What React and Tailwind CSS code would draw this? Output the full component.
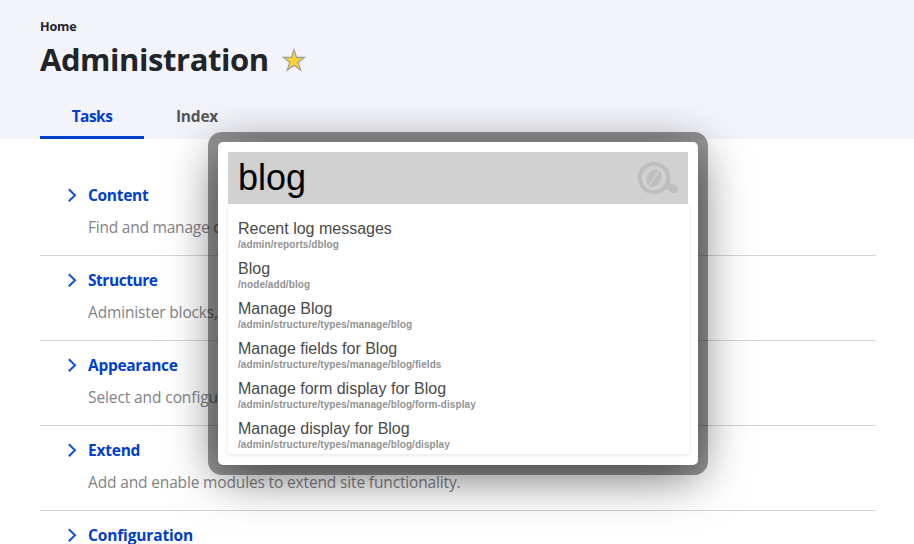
const sections = [
  { title: 'Content', text: 'Find and manage c', titleTrack: 'tracking-[-0.3px]', track: 'tracking-[-0.22px]' },
  { title: 'Structure', text: 'Administer blocks,', titleTrack: 'tracking-[-0.45px]', track: 'tracking-[-0.15px]' },
  { title: 'Appearance', text: 'Select and configu', titleTrack: 'tracking-[-0.3px]', track: 'tracking-[-0.1px]' },
  { title: 'Extend', text: 'Add and enable modules to extend site functionality.', titleTrack: 'tracking-[-0.22px]', track: 'tracking-[-0.15px]' },
  { title: 'Configuration', text: '', titleTrack: 'tracking-[-0.15px]', track: 'tracking-normal' },
];

const results = [
  ['Recent log messages', '/admin/reports/dblog'],
  ['Blog', '/node/add/blog'],
  ['Manage Blog', '/admin/structure/types/manage/blog'],
  ['Manage fields for Blog', '/admin/structure/types/manage/blog/fields'],
  ['Manage form display for Blog', '/admin/structure/types/manage/blog/form-display'],
  ['Manage display for Blog', '/admin/structure/types/manage/blog/display'],
];

function Star() {
  return (
    <svg className="mt-[6px] ml-[14px] h-6 w-6" viewBox="0 0 24 24">
      <path
        d="M12 1.5 14.6 9.4H22.6L16.2 14.2 18.8 22.2 12 17.3 5.2 22.2 7.8 14.2 1.4 9.4H9.4Z"
        fill="#fdcf35"
        stroke="#9a9a9f"
        strokeWidth="1.1"
      />
    </svg>
  );
}

function CoffeeSearch() {
  return (
    <svg className="h-[34px] w-[42px]" viewBox="0 0 42 34" fill="none">
      <circle cx="17" cy="17" r="14.2" stroke="#bebebe" strokeWidth="4" />
      <path d="M29 23.5 31.5 24.8" stroke="#bebebe" strokeWidth="5" />
      <path d="M33.2 26.2 37 28.2" stroke="#bebebe" strokeWidth="7.6" strokeLinecap="round" />
      <ellipse cx="17" cy="17" rx="7" ry="9.4" transform="rotate(32 17 17)" fill="#bebebe" />
      <path d="M22.4 8.8C19.5 15 15 18 11.4 25.2" stroke="#d1d1d1" strokeWidth="1.3" />
    </svg>
  );
}

export default function App() {
  return (
    <div className="relative h-[544px] w-[914px] overflow-hidden bg-white font-['Open_Sans','Noto_Sans',sans-serif]">
      <header className="flex h-[139px] flex-col bg-[#f3f4f9] px-10 pt-[18px]">
        <div className="h-[17px] text-[12.6px] leading-[18px] font-bold tracking-[-0.2px] text-[#232429]">Home</div>
        <div className="flex h-[50px] items-start">
          <h1 className="w-[228px] text-[31px] leading-[48px] font-bold tracking-[-0.45px] whitespace-nowrap text-[#232429]">Administration</h1>
          <div className="pt-[7px]"><Star /></div>
        </div>
        <nav className="mt-auto flex text-[15.5px] leading-[22px] font-bold">
          <a className="flex h-[34px] w-[104px] justify-center border-b-[3px] border-[#003ecc] tracking-[-0.55px] text-[#003ecc]">Tasks</a>
          <a className="flex h-[34px] w-[106px] justify-center tracking-[-0.2px] text-[#55565b]">Index</a>
        </nav>
      </header>
      <main className="mt-8 flex w-[876px] flex-col pl-10">
        {sections.map((s) => (
          <section key={s.title} className="flex h-[85px] shrink-0 gap-[10px] border-b border-[#d3d4d9] pt-3 pl-[26px]">
            <svg className="mt-[5px] h-[14px] w-3 shrink-0" viewBox="0 0 12 14" fill="none">
              <path d="M2.8 1.2 9 7.2 2.8 13.2" stroke="#0f50dc" strokeWidth="2" />
            </svg>
            <div className="whitespace-nowrap">
              <h2 className="text-[15.5px] leading-[25px] font-bold text-[#003ecc]"><span className={s.titleTrack}>{s.title}</span></h2>
              {s.text && (
                <p className="mt-[7px] text-[15.5px] leading-[25px] text-[#828388]"><span className={s.track}>{s.text}</span></p>
              )}
            </div>
          </section>
        ))}
      </main>
      <div className="absolute top-[142px] left-[218px] h-[323px] w-[480px] rounded-[5px] bg-white p-[10px] font-['Liberation_Sans',Arial,sans-serif] shadow-[0_0_0_10px_rgba(0,0,0,0.4),0_10px_50px_rgba(0,0,0,0.6)]">
        <div className="flex h-[52px] w-[460px] items-center justify-between bg-[#d1d1d1] pr-[9px] pl-[10px]">
          <span className="text-[36px] leading-[52px] text-black">blog</span>
          <CoffeeSearch />
        </div>
        <ul className="flex h-[250px] w-[461px] flex-col rounded-b-[3px] bg-white pt-4 pl-[10px] shadow-[0_1px_5px_rgba(0,0,0,0.12)] [clip-path:inset(0_-8px_-8px_-8px)]">
          {results.map(([title, path]) => (
            <li key={path} className="flex h-10 shrink-0 flex-col">
              <span className="text-[16px] leading-[18px] text-[#494949]">{title}</span>
              <span className="text-[10px] leading-[14px] font-bold tracking-[0.07px] text-[#929292]">{path}</span>
            </li>
          ))}
        </ul>
      </div>
    </div>
  );
}
